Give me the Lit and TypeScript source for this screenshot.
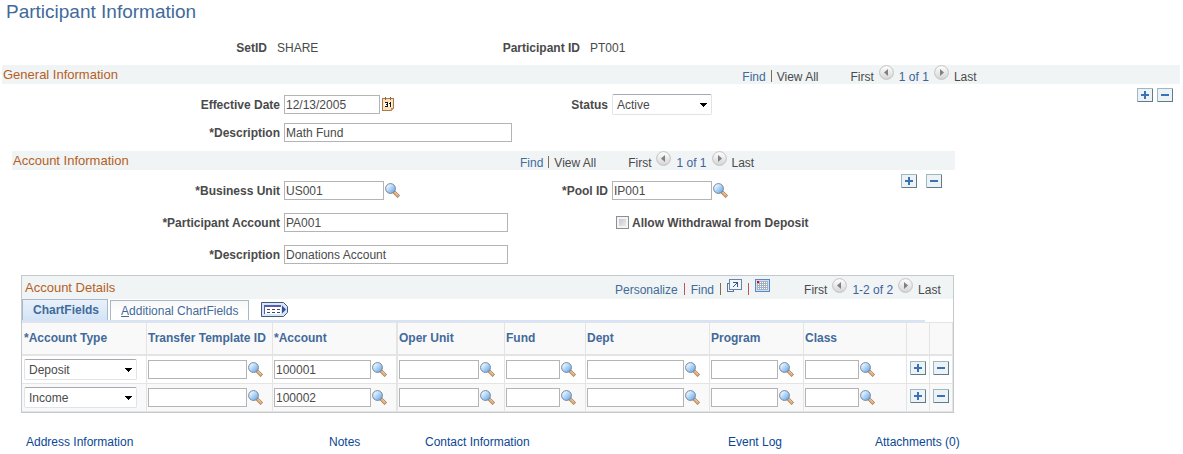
import { LitElement, html, css, svg, nothing } from "lit";
import { customElement, state } from "lit/decorators.js";

interface DetailRow {
  type: string;
  account: string;
}

const TYPES = ["Deposit", "Income"];
const LOOKUP_COLUMNS: { key: string; label: string; size: string }[] = [
  { key: "template", label: "Transfer Template ID", size: "w99" },
  { key: "account", label: "*Account", size: "w97" },
  { key: "oper", label: "Oper Unit", size: "w80" },
  { key: "fund", label: "Fund", size: "w54" },
  { key: "dept", label: "Dept", size: "w97" },
  { key: "program", label: "Program", size: "w67" },
  { key: "class", label: "Class", size: "w54" },
];

@customElement("app-root")
export class AppRoot extends LitElement {
  static styles = css`
    :host {
      display: block;
      padding: 0 3px 0 2px;
      font: 12px/14px "Liberation Sans", Arial, sans-serif;
      color: #4a4a4a;
    }
    * {
      box-sizing: border-box;
    }
    svg {
      display: block;
    }
    a {
      color: #426a9a;
      text-decoration: none;
    }
    button {
      padding: 0;
      border: 0;
      background: none;
      cursor: pointer;
      font: inherit;
      color: inherit;
    }
    h1,
    h2,
    h3 {
      margin: 0;
      font-weight: normal;
    }
    h1 {
      padding-left: 4px;
      font-size: 19px;
      line-height: 24px;
      color: #426a9a;
    }
    h2,
    h3 {
      font-size: 13px;
      line-height: 19px;
      color: #b5601f;
    }
    .keys {
      display: grid;
      grid-template-columns: 265px 193px 100px 1fr;
      column-gap: 10px;
      padding: 17px 0 10px;
    }
    .label {
      font-weight: bold;
      text-align: right;
      white-space: nowrap;
    }
    .bar {
      display: grid;
      height: 19px;
      background: #f0f4f5;
    }
    .bar.general {
      grid-template-columns: 740fr 438fr;
      padding-left: 1px;
    }
    .bar.account {
      grid-template-columns: 507fr 435fr;
      padding-left: 1px;
    }
    .nav {
      display: flex;
      align-items: flex-start;
      white-space: nowrap;
    }
    .nav > a,
    .nav > span {
      margin-top: 5px;
    }
    .pipe {
      width: 1px;
      height: 12px;
      margin: 0 5px;
      background: #8a6a4a;
    }
    .pipe.red {
      background: #c8505a;
    }
    .pager {
      display: flex;
      align-items: flex-start;
      gap: 5px;
      margin-left: 32px;
    }
    .pager > span {
      margin-top: 5px;
    }
    .pager .count {
      color: #41619a;
    }
    .body {
      display: flex;
      align-items: flex-start;
    }
    .form {
      flex: 1;
      display: grid;
      column-gap: 4px;
      align-items: center;
    }
    .form.general {
      grid-template-columns: 278px 228px 92px 1fr;
      grid-auto-rows: 21px;
      row-gap: 7px;
      padding: 10px 0 8px;
    }
    .form.account {
      grid-template-columns: 268px 228px 92px 1fr;
      grid-auto-rows: 19px;
      row-gap: 13px;
      padding: 11px 0;
    }
    .tools {
      display: flex;
      gap: 4px;
      padding: 4px 7px 0 0;
    }
    .tools.wide {
      gap: 9px;
      padding-right: 13px;
    }
    .account-box {
      max-width: 943px;
      margin-left: 10px;
    }
    .field {
      display: flex;
      align-items: center;
      gap: 1px;
    }
    .field.date {
      gap: 2px;
    }
    .text {
      height: 19px;
      margin: 0;
      padding: 0 1px;
      border: 1px solid #b4b4b4;
      border-radius: 0;
      background: #fff;
      font: inherit;
      color: #4a4a4a;
    }
    .w54 {
      width: 54px;
    }
    .w67 {
      width: 67px;
    }
    .w80 {
      width: 80px;
    }
    .w96 {
      width: 96px;
    }
    .w97 {
      width: 97px;
    }
    .w99 {
      width: 99px;
    }
    .w100 {
      width: 100px;
    }
    .w113 {
      width: 113px;
    }
    .w224 {
      width: 224px;
    }
    .w228 {
      width: 228px;
    }
    .drop {
      display: inline-grid;
      align-items: center;
      vertical-align: top;
    }
    .drop > * {
      grid-area: 1 / 1;
    }
    .drop svg {
      justify-self: end;
      margin-right: 5px;
      pointer-events: none;
    }
    select {
      appearance: none;
      width: 100%;
      height: 21px;
      margin: 0;
      padding: 0 4px;
      border: 1px solid #dfe3ea;
      border-top-color: #a8a8b2;
      border-radius: 2px;
      background: #fff;
      font: inherit;
      color: #4a4a4a;
    }
    .check {
      display: flex;
      align-items: center;
      gap: 3px;
      padding-left: 4px;
      font-weight: bold;
      white-space: nowrap;
    }
    .check input {
      appearance: none;
      width: 13px;
      height: 13px;
      margin: 0;
      border: 1px solid #8e8f8f;
      background: linear-gradient(135deg, #b9bec6, #f6f6f6);
      box-shadow: inset 0 0 0 2px #f4f4f4;
    }
    .grid {
      margin: 0 1px 0 9px;
      border: 1px solid #c3c9cc;
    }
    .gridhead {
      display: grid;
      grid-template-columns: 590fr 338fr;
      height: 23px;
      padding: 0 0 0 3px;
      background: #f0f4f5;
    }
    .gridhead h3 {
      line-height: 23px;
    }
    .gridhead .nav {
      padding-top: 2px;
    }
    .gridhead .nav > button {
      margin-top: 1px;
    }
    .gridhead .pipe {
      margin-left: 6px;
      margin-right: 6px;
    }
    .gridhead .pager {
      margin-left: 34px;
    }
    .tabs {
      display: flex;
      align-items: flex-end;
      gap: 2px;
      height: 21px;
    }
    .tab {
      height: 20px;
      padding: 0 10px;
      border: 1px solid #a9b8c9;
      border-bottom: 0;
      background: linear-gradient(#f7f7f8, #fff 60%);
      color: #426a9a;
    }
    .tab.on {
      height: 21px;
      padding-right: 8px;
      background: linear-gradient(#e9f1fa, #d3e4f7);
      font-weight: bold;
    }
    .expand {
      align-self: center;
      margin-left: 10px;
    }
    .rule {
      height: 2px;
      margin-right: 28px;
      background: #d7e3f6;
    }
    table {
      width: 100%;
      table-layout: fixed;
      border-collapse: separate;
      border-spacing: 0;
      border-top: 1px solid #e4e4e4;
    }
    th,
    td {
      padding: 0 0 0 1px;
      border-right: 1px solid #e4e4e4;
      border-bottom: 1px solid #e4e4e4;
      text-align: left;
      white-space: nowrap;
    }
    th {
      height: 33px;
      padding-bottom: 2px;
      border-bottom-width: 2px;
      background: #f9f9f9;
      color: #426a9a;
    }
    td {
      height: 28px;
    }
    tr.alt td {
      background: #f9f9f9;
    }
    th:first-child,
    td:first-child {
      padding-left: 2px;
    }
    th.lock,
    td.lock {
      border-right-width: 2px;
    }
    td.act {
      padding-left: 3px;
    }
    .c1 {
      width: 125px;
    }
    .template {
      width: 126px;
    }
    .account-col {
      width: 125px;
    }
    .oper {
      width: 107px;
    }
    .fund {
      width: 81px;
    }
    .dept {
      width: 124px;
    }
    .program {
      width: 94px;
    }
    .act-col {
      width: 23px;
    }
    .links {
      display: grid;
      grid-template-columns: 303fr 96fr 303fr 147fr 95fr;
      max-width: 968px;
      padding: 22px 0 5px 24px;
      white-space: nowrap;
    }
    .links a {
      color: #0b4795;
    }
  `;

  @state() private rows: DetailRow[] = [
    { type: "Deposit", account: "100001" },
    { type: "Income", account: "100002" },
  ];

  private lookupIcon() {
    return svg`<svg width="15" height="15" viewBox="0 0 15 15">
      <defs>
        <linearGradient id="lens" x1="0" y1="0" x2="1" y2="1">
          <stop offset=".2" stop-color="#eaf5ff"/>
          <stop offset=".8" stop-color="#78b4f0"/>
        </linearGradient>
      </defs>
      <path d="M9 9 L12.6 12.6" stroke="#8f8078" stroke-width="3.4" stroke-linecap="square"/>
      <path d="M9.2 9.2 L12.6 12.6" stroke="#eba766" stroke-width="2.2" stroke-linecap="square"/>
      <path d="M10 9.2 L13 12.2" stroke="#fbd9a8" stroke-width="0.8"/>
      <circle cx="5.5" cy="5.5" r="4.9" fill="url(#lens)" stroke="#748498"/>
    </svg>`;
  }

  private lookup(label: string) {
    return html`<button aria-label="Look up ${label}">${this.lookupIcon()}</button>`;
  }

  private plusMinus(kind: "add" | "remove") {
    return html`<button aria-label=${kind === "add" ? "Add row" : "Delete row"}>
      <svg width="16" height="14" viewBox="0 0 16 14" shape-rendering="crispEdges">
        <rect width="16" height="14" fill="#5f7d88" />
        <path d="M0 14V0H16L15 1H1V13Z" fill="#9db9bf" />
        <rect x="1" y="1" width="14" height="12" fill="#edf2f6" />
        <rect x="4" y="6" width="8" height="2" fill="#3a73b5" />
        ${kind === "add" ? svg`<rect x="7" y="3" width="2" height="8" fill="#3a73b5"/>` : nothing}
      </svg>
    </button>`;
  }

  private arrow(dir: "prev" | "next") {
    return html`<button aria-label=${dir === "prev" ? "Previous" : "Next"}>
      <svg width="15" height="15" viewBox="0 0 15 15">
        <defs>
          <linearGradient id="disc" x1="0" y1="0" x2="0" y2="1">
            <stop offset="0" stop-color="#fff" />
            <stop offset="1" stop-color="#d4d4d4" />
          </linearGradient>
        </defs>
        <circle cx="7.5" cy="7.5" r="6.9" fill="url(#disc)" stroke="#c2c2c2" />
        <path d=${dir === "prev" ? "M9 4V11L5 7.5Z" : "M6 4V11L10 7.5Z"} fill="#808080" />
      </svg>
    </button>`;
  }

  private pager(count: string) {
    return html`<div class="pager">
      <span>First</span>${this.arrow("prev")}<span class="count">${count}</span>${this.arrow("next")}<span>Last</span>
    </div>`;
  }

  private sectionNav() {
    return html`<div class="nav">
      <a href="#find">Find</a><span class="pipe"></span><span>View All</span>${this.pager("1 of 1")}
    </div>`;
  }

  private drop(id: string, size: string, value: string, options: string[], label?: string) {
    return html`<span class="drop ${size}">
      <select id=${id} aria-label=${label ?? nothing}>
        ${options.map((o) => html`<option ?selected=${o === value}>${o}</option>`)}
      </select>
      <svg width="7" height="4" viewBox="0 0 7 4" shape-rendering="crispEdges">
        <path d="M0 0H7V1H6V2H5V3H4V4H3V3H2V2H1V1H0Z" fill="#000" />
      </svg>
    </span>`;
  }

  private columnClass(key: string) {
    if (key === "account") return "account-col lock";
    return key;
  }

  private detailRow(row: DetailRow, i: number) {
    return html`<tr class=${i % 2 ? "alt" : ""}>
      <td>${this.drop(`type${i}`, "w113", row.type, TYPES, "Account Type")}</td>
      ${LOOKUP_COLUMNS.map(
        (c) => html`<td class=${c.key === "account" ? "lock" : ""}>
          <div class="field">
            <input
              class="text ${c.size}"
              type="text"
              aria-label=${c.label}
              .value=${c.key === "account" ? row.account : ""}
            />${this.lookup(c.label)}
          </div>
        </td>`
      )}
      <td class="act">${this.plusMinus("add")}</td>
      <td class="act">${this.plusMinus("remove")}</td>
    </tr>`;
  }

  render() {
    return html`
      <h1>Participant Information</h1>
      <div class="keys">
        <span class="label">SetID</span><span>SHARE</span>
        <span class="label">Participant ID</span><span>PT001</span>
      </div>

      <div class="bar general">
        <h2>General Information</h2>
        ${this.sectionNav()}
      </div>
      <div class="body">
        <div class="form general">
          <label class="label" for="date">Effective Date</label>
          <div class="field date">
            <input id="date" class="text w96" type="text" value="12/13/2005" />
            <button aria-label="Choose a date">
              <svg width="13" height="15" viewBox="0 0 13 15" shape-rendering="crispEdges">
                <path d="M0 1H12V11L9 14H0Z" fill="#a9794f" />
                <path d="M1 2H11V11H9V13H1Z" fill="#fbe0b8" />
                <path d="M2 5H10V10H2Z" fill="#fff6e6" />
                <path d="M9 11H12V12H11V13H10V14H9Z" fill="#c58f5d" />
                <path d="M3 0H4V3H3ZM8 0H9V3H8Z" fill="#8d6440" />
                <path
                  d="M3 5H6V6H3ZM5 6H6V7H5ZM4 7H6V8H4ZM5 8H6V9H5ZM3 9H6V10H3ZM8 5H9V10H8ZM7 6H8V7H7Z"
                  fill="#151515"
                />
              </svg>
            </button>
          </div>
          <label class="label" for="status">Status</label>
          ${this.drop("status", "w100", "Active", ["Active", "Inactive"])}
          <label class="label" for="desc">*Description</label>
          <input id="desc" class="text w228" type="text" value="Math Fund" />
        </div>
        <div class="tools">${this.plusMinus("add")}${this.plusMinus("remove")}</div>
      </div>

      <section class="account-box">
        <div class="bar account">
          <h2>Account Information</h2>
          ${this.sectionNav()}
        </div>
        <div class="body">
          <div class="form account">
            <label class="label" for="unit">*Business Unit</label>
            <div class="field">
              <input id="unit" class="text w100" type="text" value="US001" />${this.lookup("Business Unit")}
            </div>
            <label class="label" for="pool">*Pool ID</label>
            <div class="field">
              <input id="pool" class="text w100" type="text" value="IP001" />${this.lookup("Pool ID")}
            </div>
            <label class="label" for="pacct">*Participant Account</label>
            <input id="pacct" class="text w224" type="text" value="PA001" />
            <span></span>
            <label class="check"><input type="checkbox" />Allow Withdrawal from Deposit</label>
            <label class="label" for="adesc">*Description</label>
            <input id="adesc" class="text w224" type="text" value="Donations Account" />
          </div>
          <div class="tools wide">${this.plusMinus("add")}${this.plusMinus("remove")}</div>
        </div>

        <div class="grid">
          <div class="gridhead">
            <h3>Account Details</h3>
            <div class="nav">
              <a href="#personalize">Personalize</a><span class="pipe red"></span><a href="#gridfind">Find</a
              ><span class="pipe"></span>
              <button aria-label="View in new window">
                <svg width="15" height="14" viewBox="0 0 15 14" shape-rendering="crispEdges">
                  <path d="M0 4H4V5H1V12H6V10H7V13H0Z" fill="#5f7196" />
                  <rect x="2" y="0" width="13" height="11" fill="#6d80a6" />
                  <rect x="3" y="1" width="11" height="9" fill="#f0f6fd" />
                  <path d="M6 3H11V8H10V5H9V6H8V7H7V8H6V7H7V6H8V5H9V4H6Z" fill="#3e5583" />
                </svg></button
              ><span class="pipe red"></span>
              <button aria-label="Download to spreadsheet">
                <svg width="15" height="13" viewBox="0 0 15 13" shape-rendering="crispEdges">
                  <rect width="15" height="13" fill="#5b87c5" />
                  <rect x="1" y="1" width="13" height="11" fill="#cfe0f5" />
                  <rect x="2" y="2" width="11" height="9" fill="#fff" />
                  <path
                    d="M2 2H13V3H2ZM2 4H13V5H2ZM2 6H13V7H2ZM2 8H13V9H2ZM2 10H13V11H2ZM2 3H3V10H2ZM4 3H5V10H4ZM6 3H7V10H6ZM8 3H9V10H8ZM10 3H11V10H10ZM12 3H13V10H12Z"
                    fill="#a3b0c2"
                  />
                  <rect x="2" y="2" width="2" height="2" fill="#f00" />
                </svg>
              </button>
              ${this.pager("1-2 of 2")}
            </div>
          </div>
          <div class="tabs">
            <button class="tab on">ChartFields</button>
            <button class="tab"><u>A</u>dditional ChartFields</button>
            <button class="expand" aria-label="Show all columns">
              <svg width="27" height="15" viewBox="0 0 27 15">
                <path d="M.5 .5H22.500L26.500 4.500V10.500L22.500 14.500H.5Z" fill="#d3e6fa" stroke="#4a5578" />
                <g shape-rendering="crispEdges">
                  <rect x="3" y="3" width="17" height="9" fill="#fff" />
                  <path d="M3 3H20V5H3ZM3 5H4V12H3Z" fill="#5a5ab0" />
                  <path d="M6 7H9V8H6ZM11 7H14V8H11ZM16 7H19V8H16ZM6 10H9V11H6ZM11 10H14V11H11ZM16 10H19V11H16Z" fill="#44446e" />
                </g>
                <path d="M21 3.500V11.500L25 7.500Z" fill="#3c4a9c" />
              </svg>
            </button>
          </div>
          <div class="rule"></div>
          <table>
            <thead>
              <tr>
                <th class="c1">*Account Type</th>
                ${LOOKUP_COLUMNS.map((c) => html`<th class=${this.columnClass(c.key)}>${c.label}</th>`)}
                <th class="act-col"></th>
                <th class="act-col"></th>
              </tr>
            </thead>
            <tbody>
              ${this.rows.map((r, i) => this.detailRow(r, i))}
            </tbody>
          </table>
        </div>
      </section>

      <nav class="links">
        <a href="#address">Address Information</a>
        <a href="#notes">Notes</a>
        <a href="#contact">Contact Information</a>
        <a href="#log">Event Log</a>
        <a href="#attachments">Attachments (0)</a>
      </nav>
    `;
  }
}
